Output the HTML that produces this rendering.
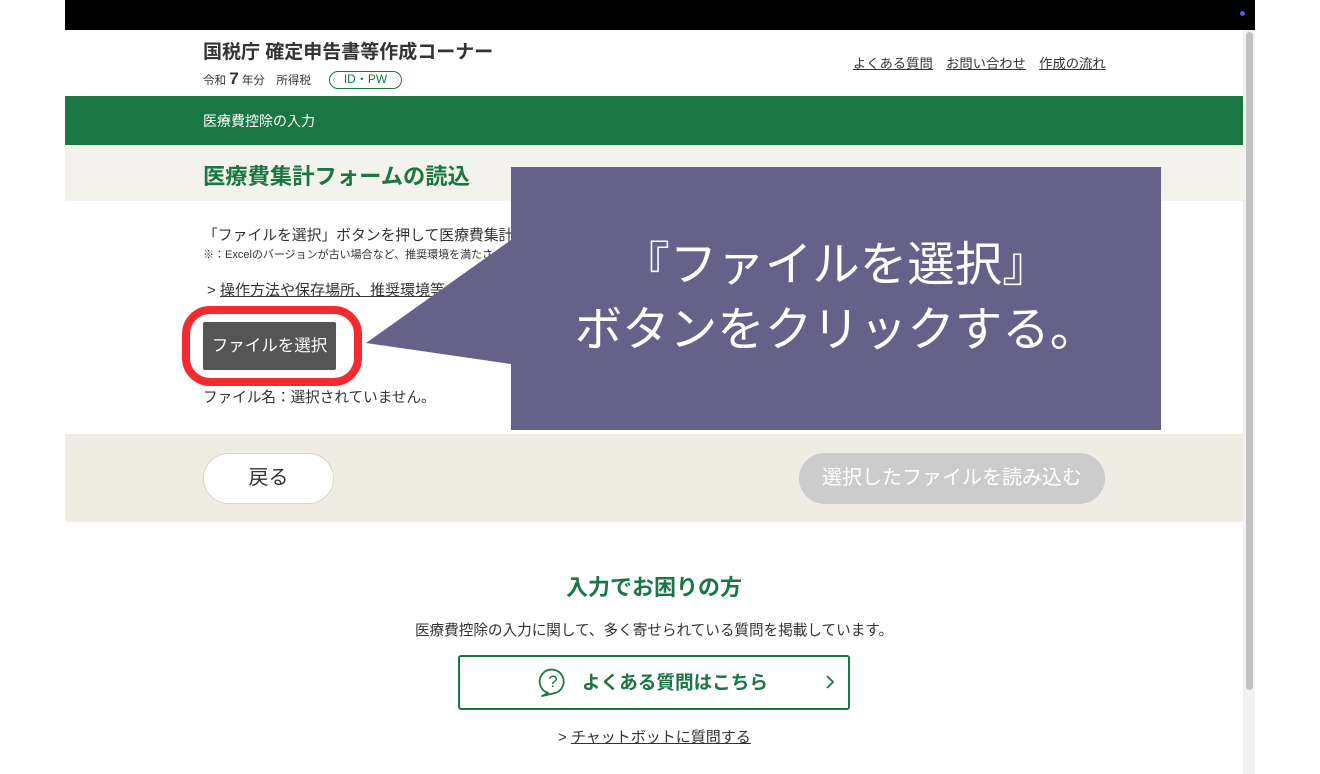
<!DOCTYPE html>
<html><head><meta charset="utf-8"><style>
*{margin:0;padding:0;box-sizing:border-box}
body{width:1320px;height:774px;position:relative;background:#fff;font-family:"Liberation Sans","Noto Sans CJK JP",sans-serif;color:#333;overflow:hidden}
.a{position:absolute;white-space:nowrap}
u{text-decoration:underline}
</style></head><body>
<div class="a" style="left:65px;top:0;width:1190px;height:30px;background:#000"></div>
<div class="a" style="left:1240px;top:11px;width:5px;height:5px;border-radius:50%;background:#5a5ae8"></div>
<div class="a" style="left:1243px;top:30px;width:12px;height:744px;background:#f2f2f2"></div>
<div class="a" style="left:1246px;top:32px;width:7px;height:658px;border-radius:4px;background:#c2c2c2"></div>

<div class="a" style="left:203px;top:37px;font-size:19px;font-weight:bold;color:#333">国税庁 確定申告書等作成コーナー</div>
<div class="a" style="left:203px;top:69px;font-size:11.5px;color:#333">令和 <b style="font-size:17px">7</b> 年分　所得税</div>
<div class="a" style="left:329px;top:71px;width:73px;height:18px;border:1.5px solid #1a7642;border-radius:10px;font-size:12px;text-align:center;line-height:15px;color:#1a7642">ID・PW</div>
<div class="a" style="left:853px;top:53px;font-size:13.3px;color:#333"><u>よくある質問</u>　<u>お問い合わせ</u>　<u>作成の流れ</u></div>

<div class="a" style="left:65px;top:96px;width:1178px;height:49px;background:#1a7642"></div>
<div class="a" style="left:203px;top:111px;font-size:14px;color:#fff">医療費控除の入力</div>
<div class="a" style="left:65px;top:145px;width:1178px;height:56px;background:#f4f2ec"></div>
<div class="a" style="left:203px;top:159px;font-size:22.3px;font-weight:bold;color:#1a7642">医療費集計フォームの読込</div>

<div class="a" style="left:203px;top:224px;font-size:14.8px">「ファイルを選択」ボタンを押して医療費集計</div>
<div class="a" style="left:203px;top:246px;font-size:11px">※：Excelのバージョンが古い場合など、推奨環境を満たさ</div>
<div class="a" style="left:207px;top:279px;font-size:15px">&gt; <u>操作方法や保存場所、推奨環境等</u></div>

<div class="a" style="left:182px;top:306px;width:180px;height:80px;border:8px solid #f52a2e;border-radius:28px"></div>
<div class="a" style="left:203px;top:322px;width:133px;height:48px;background:#555;border-radius:2px;color:#fff;font-size:16.5px;text-align:center;line-height:48px">ファイルを選択</div>
<div class="a" style="left:203px;top:386px;font-size:14.6px">ファイル名：選択されていません。</div>

<div class="a" style="left:65px;top:434px;width:1178px;height:88px;background:#efede3"></div>
<div class="a" style="left:203px;top:453px;width:131px;height:51px;background:#fff;border:1px solid #d8d4c8;border-radius:26px;font-size:20px;text-align:center;line-height:49px;color:#333">戻る</div>
<div class="a" style="left:799px;top:453px;width:306px;height:51px;background:#ccc;border-radius:26px;font-size:20px;text-align:center;line-height:51px;color:#fff">選択したファイルを読み込む</div>

<svg class="a" style="left:0;top:0" width="1320" height="774"><polygon points="366,343 511,240 511,364" fill="#656189"/></svg>
<div class="a" style="left:511px;top:167px;width:650px;height:263px;background:#656189;color:#fff;font-size:47.5px;text-align:center;line-height:65px;padding-top:66px">『ファイルを選択』<br>ボタンをクリックする。</div>

<div class="a" style="left:0;top:570px;width:1308px;text-align:center;font-size:22px;font-weight:bold;color:#1a7642">入力でお困りの方</div>
<div class="a" style="left:0;top:619px;width:1308px;text-align:center;font-size:14.6px">医療費控除の入力に関して、多く寄せられている質問を掲載しています。</div>
<div class="a" style="left:458px;top:655px;width:392px;height:55px;border:2px solid #1a7642;border-radius:3px"></div>
<svg class="a" style="left:538px;top:665px" width="30" height="34" viewBox="0 0 30 34"><path d="M10 28 A12 12 0 1 1 15 28.5 L4 31 Z" fill="none" stroke="#1a7642" stroke-width="1.8" stroke-linejoin="round"/><text x="15" y="22" text-anchor="middle" font-size="17" fill="#1a7642" font-family="Liberation Sans">?</text></svg>
<div class="a" style="left:582px;top:668px;font-size:18.6px;font-weight:bold;color:#1a7642">よくある質問はこちら</div>
<svg class="a" style="left:824px;top:674px" width="12" height="16"><path d="M3 2 L9 8 L3 14" fill="none" stroke="#1a7642" stroke-width="1.8"/></svg>
<div class="a" style="left:558px;top:726px;font-size:15px">&gt; <u>チャットボットに質問する</u></div>
</body></html>
